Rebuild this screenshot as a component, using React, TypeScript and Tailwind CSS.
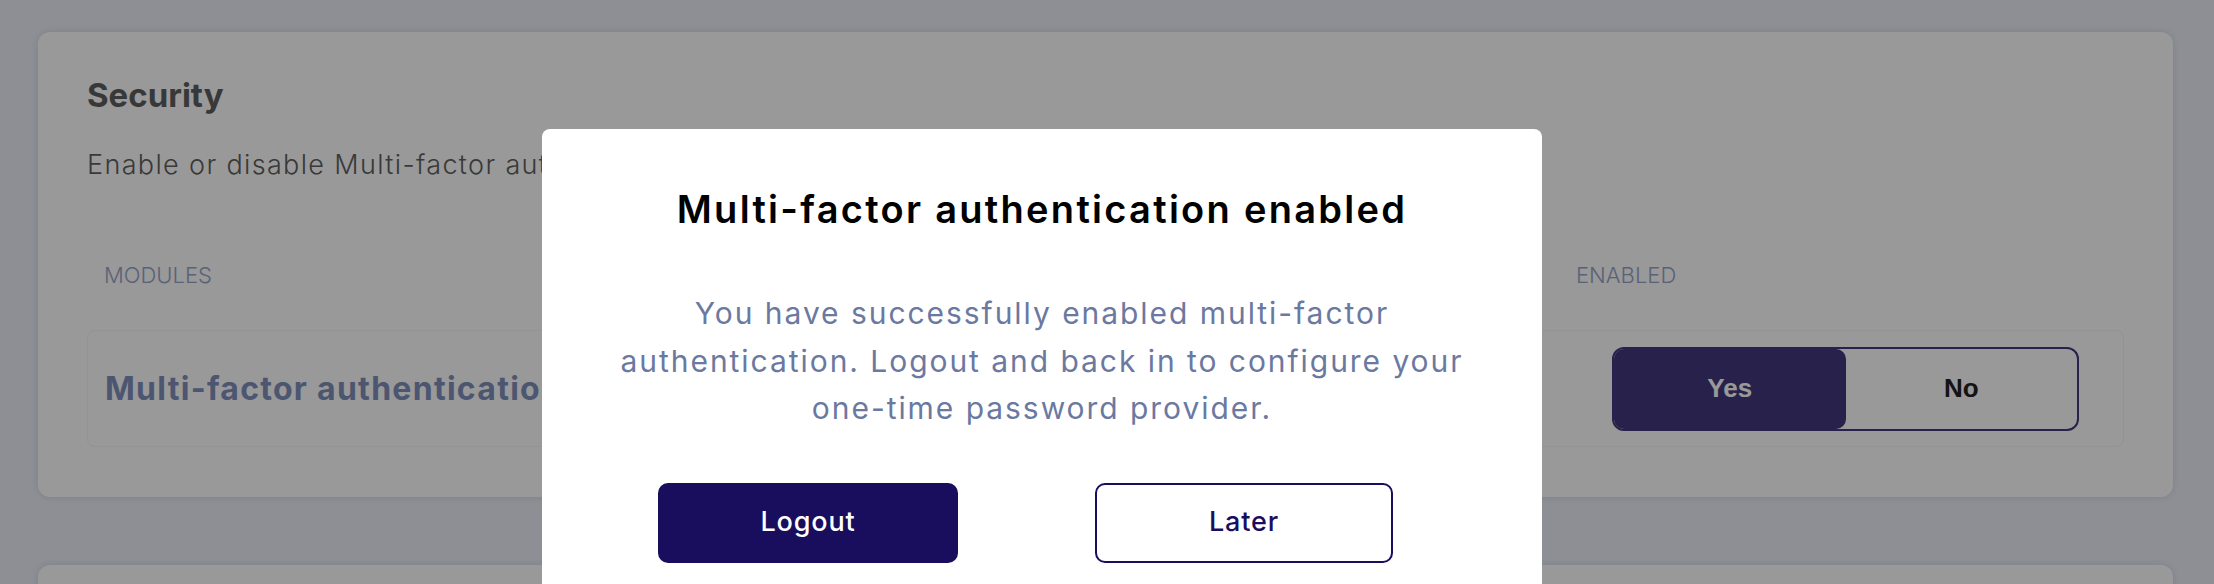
import React, { useState } from 'react';

const font = { fontFamily: 'Inter, "Noto Sans", sans-serif' };

const App: React.FC = () => {
  const [mfaEnabled, setMfaEnabled] = useState(true);

  return (
    <div className="relative h-[584px] w-full overflow-hidden bg-[#ebeef8]" style={font}>
      {/* page content */}
      <div className="flex flex-col gap-[68px] pl-[38px] pr-[41px] pt-[32px]">
        <div className="flex flex-col rounded-xl bg-white px-[49px] pt-[43px] pb-[50px] shadow-[0_0_6px_rgba(30,40,70,0.12)]">
          <h2 className="text-[33px] font-bold leading-[40px] text-[#5e5e5e]">Security</h2>
          <p className="mt-[30px] text-[27px] font-light leading-[40px] tracking-[0.05em] text-[#606060]">
            Enable or disable Multi-factor authentication for all users in your organisation.
          </p>
          <div className="mt-[75px] flex items-center justify-between pl-[17px] text-[22px] font-light uppercase leading-[30px] text-[#96a3c8]">
            <span>Modules</span>
            <span className="w-[548px]">Enabled</span>
          </div>
          <div className="mt-[40px] flex h-[117px] items-center justify-between rounded-lg border border-[#f4f5f7] pl-[17px] pr-[44px]">
            <span className="text-[32px] font-bold leading-[40px] tracking-[0.04em] text-[#808fbb]">
              Multi-factor authentication
            </span>
            <div
              className="flex h-[84px] w-[467px] rounded-[12px] border-2 border-[#41377d]"
              style={{ fontFamily: '"Liberation Sans", Arial, sans-serif' }}
            >
              <button
                onClick={() => setMfaEnabled(true)}
                className={`flex-1 rounded-[10px] text-[26px] font-bold ${mfaEnabled ? 'bg-[#41377d] text-white' : 'text-[#222222]'}`}
              >
                Yes
              </button>
              <button
                onClick={() => setMfaEnabled(false)}
                className={`flex-1 rounded-[10px] text-[26px] font-bold ${!mfaEnabled ? 'bg-[#41377d] text-white' : 'text-[#222222]'}`}
              >
                No
              </button>
            </div>
          </div>
        </div>
        <div className="h-[200px] rounded-xl bg-white shadow-[0_0_6px_rgba(30,40,70,0.12)]" />
      </div>

      {/* backdrop */}
      <div className="absolute inset-0 bg-black/40" />

      {/* modal */}
      <div className="absolute left-[542px] top-[129px] flex h-[520px] w-[1000px] flex-col items-center rounded-lg bg-white pt-[56px]">
        <h3 className="text-[38px] font-semibold leading-[48px] tracking-[0.06em] text-black">
          Multi-factor authentication enabled
        </h3>
        <p className="mt-[57px] w-[880px] text-center text-[30px] leading-[47.5px] tracking-[0.065em] text-[#6b79a1]">
          You have successfully enabled multi-factor authentication. Logout and back in to configure your one-time
          password provider.
        </p>
        <div className="mt-[50px] flex w-full gap-[137px] pl-[116px]">
          <button className="h-[80px] w-[300px] rounded-[10px] bg-[#190e5e] text-[27px] font-medium tracking-[0.03em] text-white">
            Logout
          </button>
          <button className="h-[80px] w-[298px] rounded-[10px] border-2 border-[#190e5e] bg-white text-[27px] font-medium tracking-[0.03em] text-[#190e5e]">
            Later
          </button>
        </div>
      </div>
    </div>
  );
};

export default App;
